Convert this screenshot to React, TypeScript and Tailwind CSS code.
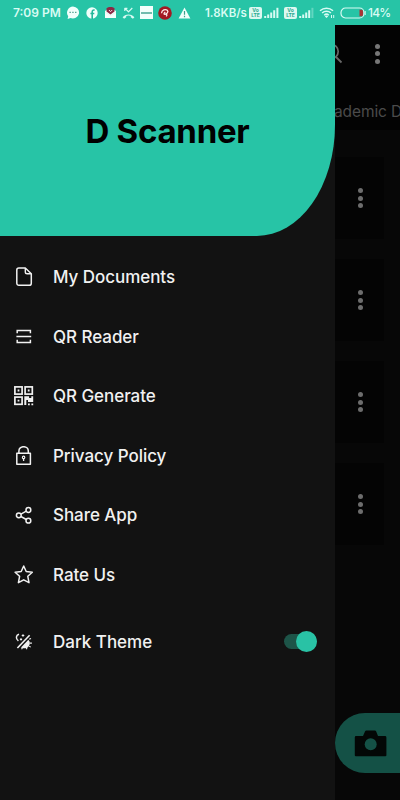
import type { ReactNode } from 'react';

function Svg({ w, h, className = '', children }: { w: number; h: number; className?: string; children: ReactNode }) {
  return (
    <svg width={w} height={h} viewBox={`0 0 ${w} ${h}`} fill="none" stroke="currentColor" strokeWidth="1.5" strokeLinejoin="round" className={`shrink-0 ${className}`}>
      {children}
    </svg>
  );
}

function Dots() {
  return (
    <div className="flex w-[5px] flex-col gap-[2.5px]">
      {[0, 1, 2].map((i) => (
        <span key={i} className="size-[5px] rounded-full bg-current" />
      ))}
    </div>
  );
}

const FileIcon = (
  <Svg w={20} h={20}>
    <path d="M11.3 1H4.9A2.1 2.1 0 0 0 2.8 3.1v13.1a2.1 2.1 0 0 0 2.1 2.1h10.3a2.1 2.1 0 0 0 2.1-2.1V6.7Z" strokeWidth="1.5" />
    <path d="M11.3 1v3.9a1.8 1.8 0 0 0 1.8 1.8h4.1" strokeWidth="1.4" />
  </Svg>
);

const ScanIcon = (
  <Svg w={20} h={20}>
    <path d="M3.2 6.2V3.5h13.2v2.7M2.4 9.5h14.8M3.2 12.8v2.7h13.2v-2.7" strokeLinejoin="miter" />
  </Svg>
);

const QrIcon = (
  <Svg w={20} h={20}>
    <g strokeLinejoin="miter" strokeWidth="1.7">
      <rect x="0.9" y="0.9" width="7.2" height="7.2" />
      <rect x="11.1" y="0.9" width="7.2" height="7.2" />
      <rect x="0.9" y="11.1" width="7.2" height="7.2" />
    </g>
    <g fill="currentColor" stroke="none">
      <path d="M3.6 3.6h1.8v1.8H3.6zM13.8 3.6h1.8v1.8h-1.8zM3.6 13.8h1.8v1.8H3.6z" />
      <path d="M10.3 10.3h4.8v1.7h2.2v-1.7h1.9v5.6h-5.2v-1.8h-1.7v5h-2zM14 17.4h1.8v1.8H14zM17.4 17.4h1.8v1.8h-1.8z" />
    </g>
  </Svg>
);

const LockIcon = (
  <Svg w={20} h={20}>
    <rect x="2.8" y="7.2" width="13.6" height="11" strokeWidth="1.5" />
    <path d="M4.9 7V4.9a4.7 4.2 0 0 1 9.4 0V7" strokeWidth="1.5" />
    <circle cx="9.6" cy="11.4" r="1.2" strokeWidth="1.2" />
    <path d="M9.6 12.5v2.5" strokeWidth="1.3" />
  </Svg>
);

const ShareIcon = (
  <Svg w={20} h={20}>
    <circle cx="4.8" cy="9.3" r="2.4" />
    <circle cx="14.4" cy="4" r="2.4" />
    <circle cx="14.4" cy="14.7" r="2.4" />
    <path d="m6.9 8.1 5.4-2.9M6.9 10.5l5.4 3" />
  </Svg>
);

const StarIcon = (
  <Svg w={20} h={20}>
    <path d="m9.7 1 2.5 5.5 6.1.7-4.5 4.1 1.2 6.4-5.3-2.9-5.3 2.9 1.2-6.4-4.5-4.1 6.1-.7Z" />
  </Svg>
);

const ThemeIcon = (
  <Svg w={20} h={20}>
    <path d="M5 2.2C1.9 3.1 1.4 6.8 4.4 8.9" />
    <path d="M3.4 16 15.6 3.2" strokeWidth="1.6" />
    <path d="M9 2.2v2.6M7.7 3.5h2.6M7 6.3v2.2M5.9 7.4h2.2" strokeWidth="1.1" />
    <path d="m7 15.4 7.4-7.6a5.3 5.3 0 0 1-.2 7.1c-2 1.7-4.9 2-7.2.5Z" fill="currentColor" stroke="none" />
    <path d="m15.2 7.2 1.8-.8M16 11.1h1.9M15.1 14.1l1.7 1M12.2 15.2l.7 2M8.5 15.5l-.9 1.7" strokeWidth="1.1" />
  </Svg>
);

const items = [
  { label: 'My Documents', icon: FileIcon },
  { label: 'QR Reader', icon: ScanIcon },
  { label: 'QR Generate', icon: QrIcon },
  { label: 'Privacy Policy', icon: LockIcon },
  { label: 'Share App', icon: ShareIcon },
  { label: 'Rate Us', icon: StarIcon },
];

function Lte() {
  return (
    <span className="flex h-[12px] w-[13px] shrink-0 flex-col items-center justify-center rounded-[2px] bg-[#dcf8f1] text-[5px] leading-[5px] font-bold text-[#28a98f]">
      <span>Vo</span>
      <span>LTE</span>
    </span>
  );
}

function Signal({ last }: { last: string }) {
  return (
    <Svg w={15} h={11} className="ml-[2px]">
      <path d="M1.2 11V9M4.2 11V7.4M7.2 11V5.4M10.2 11V3.2" strokeWidth="2" />
      <path d="M13.4 11V.8" strokeWidth="2" className={last} />
    </Svg>
  );
}

function StatusBar() {
  return (
    <div className="flex h-[25px] items-center bg-[#27c4a6] pl-[13px] text-[#d8fbf3]">
      <span className="w-[53px] pt-px text-[12px] font-semibold whitespace-nowrap">7:09 PM</span>
      <Svg w={14} h={14}>
        <path d="M7 .5a6.3 6 0 1 1-2.5 11.6L1.6 13l.6-2.7A6.2 6.2 0 0 1 7 .5Z" fill="#f1fffb" stroke="none" />
        <path d="M3.5 6.3h1.3M6.3 6.3h1.3M9.1 6.3h1.3" stroke="#489b8b" strokeWidth="1.2" />
      </Svg>
      <Svg w={12} h={12} className="ml-[6px]">
        <circle cx="6" cy="6" r="5.7" fill="#effffb" stroke="none" />
        <path d="M6.2 12V4.9c0-1.5.8-2 2.4-1.8M4.4 6.5h3.9" stroke="#23b79a" strokeWidth="1.6" />
      </Svg>
      <Svg w={13} h={13} className="ml-[6px]">
        <path d="m1 5 5.5-3.7L12 5v7H1Z" fill="#f4fffc" stroke="none" />
        <path d="M2.5 2.3c2-1.8 6.2-1.8 8 0v3.2l-4 3-4-3Z" fill="#8a2945" stroke="none" />
        <path d="m5 4 1.5 1.7L8.2 4" stroke="#f4dce2" strokeWidth="1" />
        <path d="m1 6 5.5 3.5L12 6" stroke="#e8f6f2" strokeWidth="1" />
      </Svg>
      <Svg w={13} h={12} className="ml-[5px]">
        <path d="M3 1.4 6.5 4.8 10.3 1M2.8 3.9V1.3h2.6" strokeWidth="1.2" />
        <path d="M.6 10.3C1.8 8.6 4 7.4 6.5 7.4s4.700 1.2 5.900 2.900l-1.500 1.500-2.100-1.500V8.900a8 8 0 0 0-4.600 0v1.400l-2.100 1.500Z" fill="currentColor" stroke="none" />
      </Svg>
      <span className="ml-[5px] flex h-[13px] w-[13px] shrink-0 items-center justify-center bg-[#f2fffb]">
        <span className="h-[2px] w-[11px] bg-[#72bcae]" />
      </span>
      <Svg w={14} h={14} className="ml-[5px]">
        <circle cx="7" cy="7" r="6.8" fill="#a21922" stroke="none" />
        <path d="M3.5 7.3C3.8 4 7.4 2.7 9.3 4.2c1.8 1.8-.8 4-2.6 4.1-1.1 0-.9-1.2.6-2.2M6.9 8.4c1.8-.7 2.8.4 1.2 2" stroke="#ffe9e9" strokeWidth="1.3" />
      </Svg>
      <Svg w={13} h={12} className="ml-[6px]">
        <path d="M6.5.5 12.4 11.5H.6Z" fill="#f1fffb" stroke="none" />
        <path d="M6.5 4v3.8M6.5 8.8v1.4" stroke="#3aa18c" strokeWidth="1.2" />
      </Svg>
      <span className="ml-[14px] w-[44px] shrink-0 pt-[2px] text-[11.5px] font-semibold whitespace-nowrap">1.8KB/s</span>
      <Lte />
      <Signal last="text-[#d8fbf3]" />
      <span className="w-[5px]" />
      <Lte />
      <Signal last="text-[#62d6c0]" />
      <Svg w={17} h={13} className="ml-[5px]">
        <path d="M1 4.8a9.6 9.6 0 0 1 13 0M3.1 7a6.600 6.600 0 0 1 8.800 0M5.200 9.200a3.400 3.400 0 0 1 4.600 0" strokeWidth="1.5" />
        <path d="m7.5 12 1.700-1.700a2.400 2.400 0 0 0-3.400 0Z" fill="currentColor" stroke="none" />
        <path d="M12.5 9v3M14.7 9v3" strokeWidth="1" />
      </Svg>
      <Svg w={26} h={12} className="ml-[4px]">
        <rect x="1" y="1" width="23" height="10" rx="4.5" strokeWidth="1.2" />
        <path d="M19.500 2.700h2.500a2 2 0 0 1 1 1.800v3a2 2 0 0 1-1 1.800h-2.500Z" fill="#a83435" stroke="none" />
        <path d="M25.2 4v4" strokeWidth="1" />
      </Svg>
      <span className="ml-[2px] pt-px text-[12px] font-medium tracking-[-0.8px]">14%</span>
    </div>
  );
}

export default function App() {
  return (
    <div className="relative h-[800px] w-[400px] overflow-hidden bg-[#070707] font-['Inter','Liberation_Sans',sans-serif]">
      <StatusBar />

      <div className="bg-[#030303] text-[#777]">
        <div className="flex h-[57px] items-center justify-end pr-[20px]">
          <Svg w={20} h={22} className="mr-[31px] text-[#686868]">
            <circle cx="7" cy="8.5" r="7.2" strokeWidth="1.7" />
            <path d="m12 14 5.5 5.5" strokeWidth="1.8" />
          </Svg>
          <Dots />
        </div>
        <div className="flex h-[48px] items-center pt-[12px] pl-[334px] text-[15.5px] tracking-[-0.1px] whitespace-nowrap text-[#4b4b4b]">ademic D</div>
      </div>
      <div className="flex flex-col gap-[20px] pt-[27px] pr-[16px]">
        {[0, 1, 2, 3].map((i) => (
          <div key={i} className="flex h-[82px] items-center justify-end bg-[#040404] pr-[21.5px] text-[#6d6d6d]">
            <Dots />
          </div>
        ))}
      </div>

      <div className="absolute top-[713px] left-[335px] flex h-[60px] w-[110px] items-center rounded-l-full bg-[#145146] pl-[19px]">
        <Svg w={33} h={27}>
          <path d="M2 6h7l2-4.5a1.5 1.5 0 0 1 1.4-1h8.4a1.5 1.5 0 0 1 1.4 1L24 6h7a1.4 1.4 0 0 1 1.4 1.4v17.8a1 1 0 0 1-1 1H1.8a1 1 0 0 1-1-1V7.2A1.2 1.2 0 0 1 2 6Z" fill="#030706" stroke="none" />
          <circle cx="16.7" cy="14.3" r="6" fill="#145146" stroke="none" />
        </Svg>
      </div>

      <aside className="absolute top-[25px] left-0 h-[775px] w-[335px] bg-[#121212] text-[#f1f1f1]">
        <div className="flex h-[211px] items-center justify-center rounded-br-[78px_111px] bg-[#27c4a6] pt-[2px] text-[33px] font-bold tracking-[-0.25px] text-black">
          D Scanner
        </div>
        <nav className="flex flex-col pt-[11.5px]">
          {items.map(({ label, icon }) => (
            <div key={label} className="flex h-[59.6px] items-center gap-[19px] pl-[14px]">
              {icon}
              <span className="pt-px text-[17px] font-medium tracking-[-0.05px]">{label}</span>
            </div>
          ))}
        </nav>
        <div className="mt-[6.5px] flex h-[60px] items-center gap-[19px] pr-[18px] pl-[14px]">
          {ThemeIcon}
          <span className="flex-1 pt-[2px] text-[17px] font-medium">Dark Theme</span>
          <span className="flex h-[15px] w-[33px] items-center justify-end rounded-full bg-[#1d5448]">
            <span className="size-[21px] shrink-0 rounded-full bg-[#29c2a5]" />
          </span>
        </div>
      </aside>
    </div>
  );
}
